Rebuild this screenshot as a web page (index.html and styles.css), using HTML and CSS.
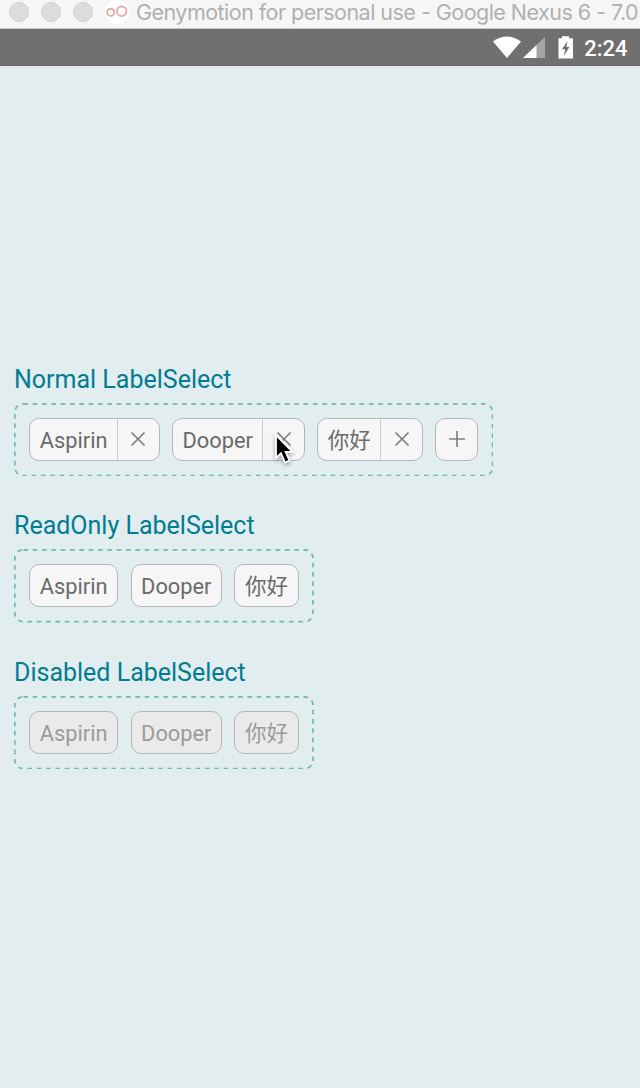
FILE: index.html
```html
<!DOCTYPE html>
<html lang="en">
<head>
<meta charset="utf-8">
<title>LabelSelect</title>
<link rel="stylesheet" href="styles.css">
</head>
<body>
<header class="window-bar">
  <span class="light"></span><span class="light"></span><span class="light"></span>
  <svg class="logo" width="24" height="24" viewBox="0 0 24 24"><circle cx="12" cy="12" r="12" fill="#fff"/><g fill="none" stroke="#e6a9b0" stroke-width="1.9"><circle cx="5.7" cy="12.3" r="3.6"/><circle cx="16.7" cy="11.3" r="4.8"/></g></svg>
  <span class="window-title">Genymotion for personal use - Google Nexus 6 - 7.0</span>
</header>
<div class="status-bar">
  <svg width="94" height="28" viewBox="0 0 94 28">
    <path d="M6 8.5Q20-1.5 34 8.5L20 25Z" fill="#fff"/>
    <path d="M58 4V25H36Z" fill="#a5a5a5"/><path d="M49.5 12.1V25H36Z" fill="#fff"/>
    <path d="M75 3.2H82V5.2H86V25.5H71.5V5.2H75Z" fill="#fff"/>
    <path d="M80.5 8L75 16.2H78.2L76.8 23L82.4 14H79.3Z" fill="#707070"/>
  </svg>
  <span class="clock">2:24</span>
</div>
<main class="screen">
  <section class="group">
    <h2>Normal LabelSelect</h2>
    <div class="select">
      <svg class="outline"><rect class="dash"/></svg>
      <span class="chip"><span class="name">Aspirin</span><span class="remove"><svg width="16" height="16"><path d="M1.5 1.5L14.5 14.5M14.5 1.5L1.5 14.5"/></svg></span></span>
      <span class="chip"><span class="name">Dooper</span><span class="remove"><svg width="16" height="16"><path d="M1.5 1.5L14.5 14.5M14.5 1.5L1.5 14.5"/></svg></span></span>
      <span class="chip"><span class="name han">你好</span><span class="remove"><svg width="16" height="16"><path d="M1.5 1.5L14.5 14.5M14.5 1.5L1.5 14.5"/></svg></span></span>
      <span class="chip add"><svg width="18" height="18"><path d="M9 1V17M1 9H17"/></svg></span>
    </div>
  </section>
  <section class="group">
    <h2>ReadOnly LabelSelect</h2>
    <div class="select">
      <svg class="outline"><rect class="dash"/></svg>
      <span class="chip"><span class="name">Aspirin</span></span>
      <span class="chip"><span class="name">Dooper</span></span>
      <span class="chip"><span class="name han">你好</span></span>
    </div>
  </section>
  <section class="group disabled">
    <h2>Disabled LabelSelect</h2>
    <div class="select">
      <svg class="outline"><rect class="dash"/></svg>
      <span class="chip"><span class="name">Aspirin</span></span>
      <span class="chip"><span class="name">Dooper</span></span>
      <span class="chip"><span class="name han">你好</span></span>
    </div>
  </section>
</main>
<svg class="cursor" width="24" height="36" viewBox="0 0 24 36"><path d="M4 3V26L9 21.3L13 30.5L17.5 28.5L13.6 19.8H20.5Z" fill="#000" stroke="#fff" stroke-width="1.8"/></svg>
</body>
</html>
```
FILE: styles.css
```css
* { box-sizing: border-box; }
body {
  margin: 0;
  width: 640px;
  height: 1088px;
  overflow: hidden;
  background: #e1edef;
  font-family: Roboto, "Noto Sans CJK SC", sans-serif;
}
.window-bar {
  display: flex;
  height: 29px;
  padding: 0 0 5px 9px;
  align-items: center;
  background: #f6f6f6;
  border-bottom: 1px solid #c9caca;
  overflow: hidden;
  white-space: nowrap;
}
.light {
  flex: none;
  width: 20px;
  height: 20px;
  margin-right: 12px;
  border: 1px solid #cfcfcf;
  border-radius: 50%;
  background: #dcdcdc;
}
.logo { flex: none; margin-right: 7px; }
.window-title {
  font: 21.5px/24px Inter, sans-serif;
  letter-spacing: -0.53px;
  color: #b0b0b0;
}
.status-bar {
  display: flex;
  align-items: center;
  justify-content: flex-end;
  height: 37.4px;
  padding-right: 12.5px;
  background: #707070;
  border-bottom: 1px solid #646767;
}
.clock {
  margin-left: 3px;
  padding-top: 3px;
  color: #fff;
  font-size: 22px;
  font-weight: 500;
  line-height: 28px;
}
.screen { padding: 297.6px 14px 0; }
.group { height: 146.5px; }
h2 {
  margin: 0;
  height: 38.8px;
  font-size: 25px;
  font-weight: 400;
  line-height: 31px;
  color: #017c92;
}
.select {
  position: relative;
  display: flex;
  width: max-content;
  height: 73.5px;
  padding: 15.2px;
  gap: 12.4px;
}
.outline {
  position: absolute;
  inset: 0;
  width: 100%;
  height: 100%;
}
.dash {
  x: 0.8px;
  y: 0.8px;
  width: calc(100% - 1.6px);
  height: calc(100% - 1.6px);
  rx: 8.5px;
  fill: none;
  stroke: #6dbba8;
  stroke-width: 1.7px;
  stroke-dasharray: 4.67px;
}
.chip {
  position: relative;
  display: flex;
  height: 43px;
  border: 1px solid #b5b7b8;
  border-radius: 10px;
  background: #f6f6f6;
  color: #6b6b6b;
  overflow: hidden;
}
.name {
  padding: 0 9.6px;
  font-size: 21.8px;
  line-height: 44px;
}
.han { font-size: 21.5px; line-height: 43.5px; }
.remove, .add {
  display: flex;
  align-items: center;
  justify-content: center;
}
.remove { width: 41.4px; border-left: 1px solid #c9caca; }
.add { width: 43px; }
.chip path { fill: none; stroke: #808080; stroke-width: 1.7; }
.disabled .chip { background: #eaeaea; color: #9b9b9b; }
.cursor {
  position: absolute;
  left: 272px;
  top: 432px;
  filter: drop-shadow(0 2px 2px #0005);
}
```
